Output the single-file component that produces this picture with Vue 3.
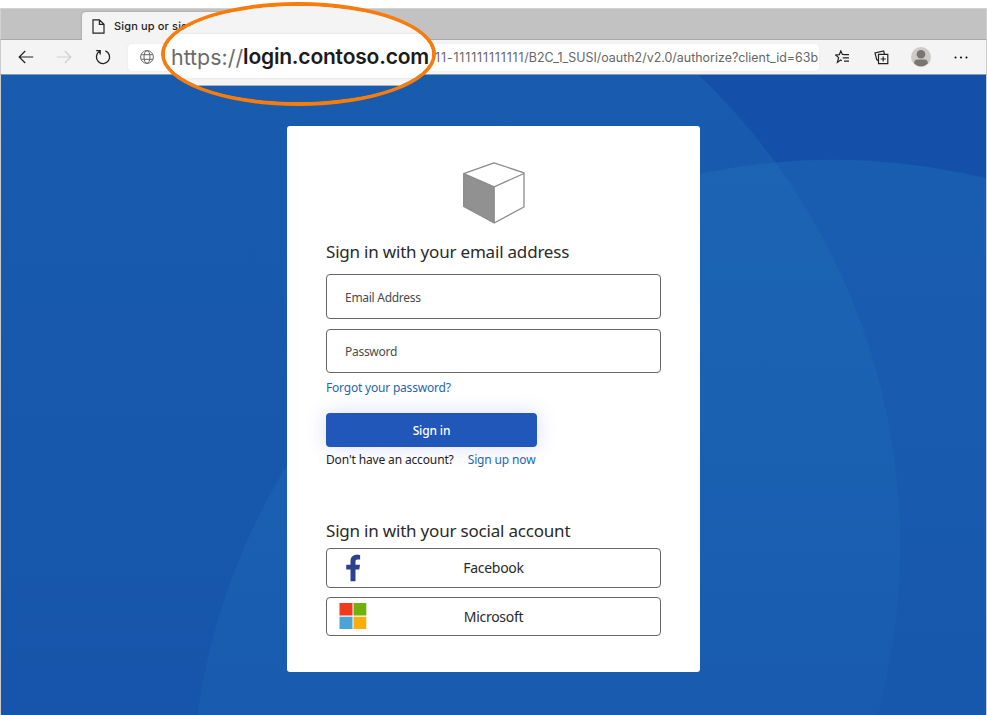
<script setup>
const fields = ['Email Address', 'Password']
</script>

<template>
  <div class="window">
    <div class="tabstrip">
      <div class="tab">
        <svg class="doc" viewBox="0 0 13 15"><path d="M1 .8h6.4L12 5.3v8.9H1zM7.4.8v4.5H12" fill="none" stroke="#222" stroke-width="1.2" /></svg>
        <span class="tab-title">Sign up or sign in</span>
      </div>
    </div>

    <div class="toolbar">
      <svg class="back" viewBox="0 0 16 14"><path d="M15.2 7H1.2M7.2 1 1.2 7l6 6" fill="none" stroke="#222" stroke-width="1.2" /></svg>
      <svg class="forward" viewBox="0 0 16 14"><path d="M.8 7h14M8.8 1l6 6-6 6" fill="none" stroke="#cfcfcf" stroke-width="1.2" /></svg>
      <svg class="reload" viewBox="0 0 16 16"><path d="M10.4 1.8A6.6 6.6 0 1 1 4.6 2.3M1.2 1.6h4v4" fill="none" stroke="#222" stroke-width="1.3" /></svg>
      <div class="address">
        <svg class="globe" viewBox="0 0 14 14"><g fill="none" stroke="#666" stroke-width="1"><circle cx="7" cy="7" r="6.4" /><ellipse cx="7" cy="7" rx="3" ry="6.4" /><path d="M1.2 4.7h11.6M1.2 9.3h11.6" /></g></svg>
        <span class="url"><span class="tenant">111-111111111111</span>/B2C_1_SUSI/oauth2/v2.0/authorize?client_id=63b</span>
      </div>
      <svg class="star" viewBox="0 0 16 14"><path d="M8.8 4.5H7.4L5.8.9 4.3 4.7.7 5l2.9 2.6-1.2 4.8L5.7 10l1.1.8M8.6 4.7H14M7.7 7.9H14M9 11.1h5" fill="none" stroke="#222" stroke-width="1.2" /></svg>
      <svg class="collections" viewBox="0 0 15 15"><path d="M4.5 4.4h9.3v9.2H4.5zM9.2 6.4v5.2M6.6 9h5.2M4.3 10.7 2.7 9.6 1 2.9 9.7.9l.7 3.2" fill="none" stroke="#222" stroke-width="1.2" /></svg>
      <svg class="avatar" viewBox="0 0 20 20"><circle cx="10" cy="10" r="10" fill="#cdcbc8" /><circle cx="10" cy="7.2" r="4.3" fill="#7b7572" /><path d="M3 16.2c.3-2.6 1.7-3.6 3.3-3.6h7.4c1.6 0 3 1 3.3 3.6a9.5 9.5 0 0 1-14 0z" fill="#7b7572" /></svg>
      <svg class="more" viewBox="0 0 14 3"><circle cx="1.5" cy="1.5" r="1" /><circle cx="7" cy="1.5" r="1" /><circle cx="12.5" cy="1.5" r="1" /></svg>
    </div>

    <main class="page">
      <svg class="backdrop" viewBox="0 74 987 641" preserveAspectRatio="none">
        <defs>
          <linearGradient id="arcA" gradientUnits="userSpaceOnUse" x1="0" y1="74" x2="0" y2="715">
            <stop offset="0" stop-color="#2173b8" stop-opacity=".34" />
            <stop offset=".5" stop-color="#2173b8" stop-opacity=".24" />
            <stop offset="1" stop-color="#2173b8" stop-opacity=".14" />
          </linearGradient>
          <linearGradient id="arcB" gradientUnits="userSpaceOnUse" x1="0" y1="160" x2="0" y2="715">
            <stop offset="0" stop-color="#2377bd" stop-opacity=".34" />
            <stop offset=".6" stop-color="#2377bd" stop-opacity=".26" />
            <stop offset="1" stop-color="#2377bd" stop-opacity=".18" />
          </linearGradient>
        </defs>
        <rect y="74" width="987" height="641" fill="#1450a9" />
        <circle cx="251" cy="545" r="650" fill="url(#arcA)" />
        <circle cx="834" cy="802" r="643" fill="url(#arcB)" />
      </svg>

      <section class="card">
        <svg class="cube" viewBox="0 0 62 62">
          <path d="M.7 11.6 31.2 24.8V61L.7 44.4z" fill="#919191" />
          <path d="M31 .8 61 10.9V45L31.2 61 .7 44.4V11.6zM.7 11.6l30.5 13.2L61 11.5M31.2 24.8V61" fill="none" stroke="#8c8c8c" stroke-width="1.3" stroke-linejoin="round" />
        </svg>

        <h2 class="email-title">Sign in with your email address</h2>
        <div class="fields">
          <div v-for="field in fields" :key="field" class="field"><span>{{ field }}</span></div>
        </div>
        <a class="forgot">Forgot your password?</a>
        <button class="submit"><span>Sign in</span></button>
        <p class="signup"><span class="question">Don't have an account?</span><a>Sign up now</a></p>

        <h2 class="social-title">Sign in with your social account</h2>
        <div class="providers">
          <button class="provider">
            <svg class="logo" viewBox="0 0 28 28"><path d="M11.5 27.2V15.6H7.2v-4.8h4.3V7.4C11.5 3 14 .8 17.8.8c1.6 0 2.8.1 3.3.2v4.4h-2.3c-1.8 0-2.3.9-2.3 2.2v3.2H21l-.7 4.8h-3.8v11.6z" fill="#2c4190" /></svg>
            <span>Facebook</span>
          </button>
          <button class="provider">
            <svg class="logo" viewBox="0 0 28 28"><path d="M.5 1h13v12.5H.5z" fill="#f03a1d" /><path d="M14.5 1h12.8v12.5H14.5z" fill="#70b20b" /><path d="M.5 14.7h13V27H.5z" fill="#4aa5d5" /><path d="M14.5 14.7h12.8V27H14.5z" fill="#faad0c" /></svg>
            <span>Microsoft</span>
          </button>
        </div>
      </section>
    </main>

    <div class="lens">
      <div class="lens-view">
        <div class="lens-address"><span class="scheme">https://</span><span class="host">login.contoso.com</span></div>
      </div>
    </div>
  </div>
</template>

<style>
body { margin: 0; background: #fff; overflow: hidden; }
</style>

<style scoped>
* { box-sizing: border-box; }
.window { position: relative; width: 987px; height: 715px; padding-top: 8px; display: flex; flex-direction: column; overflow: hidden; font-family: "Noto Sans", "Open Sans", sans-serif; color: #222; }
.window svg { flex: none; display: block; }
.tabstrip { height: 32px; flex: none; background: #c2c2c2; border: 1px solid #d2d2d2; border-bottom: 1px solid #a9a9a9; padding: 3px 0 0 81px; }
.tab { width: 290px; height: 29px; background: #f4f4f4; border-radius: 4px 4px 0 0; box-shadow: 0 0 2px #888; display: flex; align-items: center; padding: 0 0 1px 10px; }
.doc { width: 13px; height: 15px; }
.tab-title { margin-left: 9px; font: 500 11px/16px Inter, sans-serif; letter-spacing: .15px; color: #222; white-space: nowrap; }
.toolbar { height: 35px; flex: none; display: flex; align-items: center; padding-left: 17px; background: #f4f4f4; border-right: 1px solid #ccc; border-bottom: 1px solid #8a9bb0; border-left: 1px solid #ccc; }
.back, .forward { width: 16px; height: 14px; }
.forward { margin-left: 22px; }
.reload { width: 16px; height: 16px; margin-left: 23px; }
.address { width: 691px; height: 27px; margin-left: 17px; padding: 0 1px 0 12px; background: #fff; border-radius: 4px; display: flex; align-items: center; box-shadow: 0 0 2px #e2e2e2; }
.globe { width: 14px; height: 14px; }
.url { margin-left: auto; padding-top: 1px; font: 400 12.45px/18px Inter, sans-serif; color: #666; white-space: nowrap; }
.tenant { letter-spacing: .85px; }
.star { width: 16px; height: 14px; margin-left: 16px; }
.collections { width: 15px; height: 15px; margin-left: 23px; }
.avatar { width: 20px; height: 20px; margin-left: 22px; }
.more { width: 14px; height: 3px; margin-left: 23px; }

.page { position: relative; flex: 1; min-height: 0; padding-top: 51px; display: flex; justify-content: center; align-items: flex-start; border: solid #ccc; border-width: 0 1px; }
.backdrop { position: absolute; inset: 0; width: 100%; height: 100%; }
.card { position: relative; width: 413px; height: 546px; padding: 36px 39px 0; background: #fff; border-radius: 3px; display: flex; flex-direction: column; align-items: flex-start; }
.cube { width: 62px; height: 62px; align-self: center; }
h2 { margin: 0; font-size: 17px; line-height: 24px; font-weight: 400; color: #2a2a2a; white-space: nowrap; letter-spacing: -.2px; }
.email-title { margin-top: 16px; }
.fields { width: 335px; margin-top: 10px; display: flex; flex-direction: column; gap: 10px; }
.field { height: 44.5px; padding: 2px 18px 0; border: 1px solid #666; border-radius: 4px; display: flex; align-items: center; font-size: 12px; color: #4b4b4b; letter-spacing: -.28px; }
.forgot { margin-top: 7px; font-size: 12px; line-height: 16px; color: #1f66b0; letter-spacing: -.2px; }
.submit { width: 211px; height: 34px; margin-top: 17px; padding-top: 2px; border: 0; border-radius: 4px; background: #2057b8; color: #fff; font: 500 12px/16px "Noto Sans", sans-serif; letter-spacing: -.15px; box-shadow: 0 0 20px rgba(65, 85, 225, .2); }
.signup { margin: 5px 0 0; display: flex; gap: 14px; font-size: 12px; line-height: 16px; white-space: nowrap; color: #222; letter-spacing: -.14px; }
.signup a { color: #1f66b0; }
.social-title { margin-top: 51px; }
.providers { width: 335px; margin-top: 5px; display: flex; flex-direction: column; gap: 9px; }
.provider { height: 39.5px; padding: 0 12px; display: grid; grid-template-columns: 28px 1fr 28px; align-items: center; border: 1px solid #666; border-radius: 4px; background: #fff; font: 400 14px/20px "Noto Sans", sans-serif; letter-spacing: -.3px; color: #2a2a2a; }
.provider span { padding-top: 1px; }
.logo { width: 28px; height: 28px; }

/* Magnifier laid over the address bar */
.lens { position: absolute; left: 161px; top: 2px; width: 275px; height: 104px; border: 4px solid #f77c0c; border-radius: 50%; overflow: hidden; }
.lens-view { height: 80px; padding-top: 28px; background: #f4f4f4; border-bottom: 1px solid #a9b3b5; }
.lens-address { height: 44px; padding: 1px 0 0 6px; background: #fff; display: flex; align-items: center; white-space: nowrap; font: 21.4px/30px Inter, sans-serif; box-shadow: 0 0 3px #ddd; }
.scheme { color: #6b6b6b; }
.host { color: #1b1b1b; font-weight: 600; font-size: 21px; letter-spacing: -.2px; }
.lens::after { content: ""; display: block; height: 30px; background: #185baf; }
</style>
